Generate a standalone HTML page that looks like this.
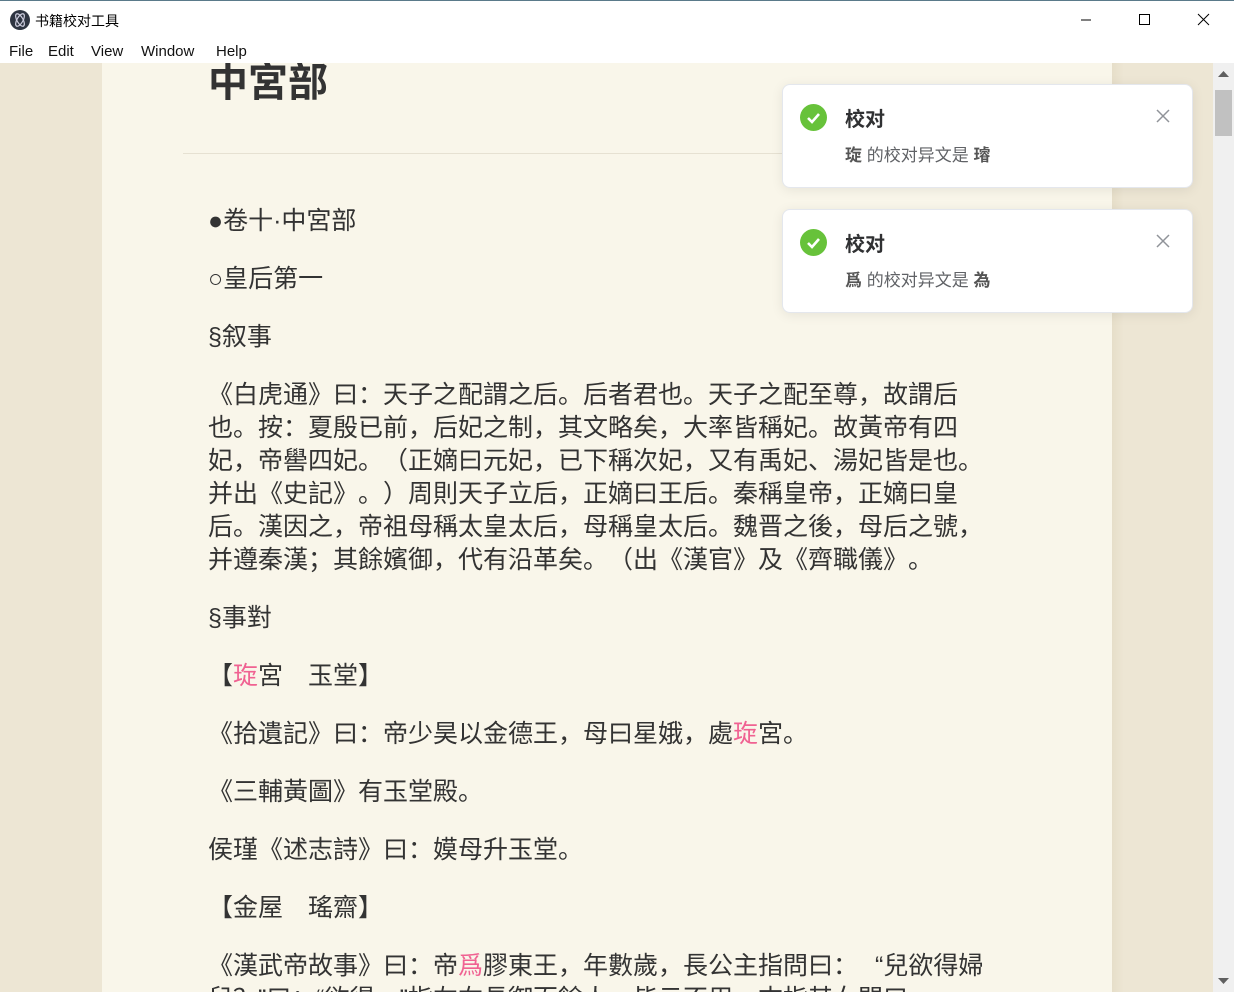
<!DOCTYPE html>
<html><head><meta charset="utf-8"><style>
*{margin:0;padding:0;box-sizing:border-box}
body{width:1234px;height:992px;overflow:hidden;background:#fff;font-family:"Liberation Sans","Noto Sans CJK SC",sans-serif;position:relative}
.tb{position:absolute;left:0;top:0;width:1234px;height:38px;background:#fff;border-top:1px solid #5a7a8a}
.tb .t{position:absolute;left:35px;top:10px;font-size:14px;color:#000}
.ic{position:absolute;left:10px;top:9px;width:20px;height:20px;border-radius:50%;background:#2f3542}
.menu{position:absolute;left:0;top:38px;height:25px;width:1234px;background:#fff;font-size:15px;color:#111}
.menu span{position:absolute;top:5px}
.wc{position:absolute;top:0;height:38px;width:58px}
.bgl{position:absolute;left:0;top:63px;width:102px;height:929px;background:#ede6d4}
.bgr{position:absolute;left:1112px;top:63px;width:102px;height:929px;background:linear-gradient(90deg,#e6dec9,#ede6d4 12px)}
.page{position:absolute;left:102px;top:63px;width:1010px;height:929px;background:#f9f6ea;overflow:hidden}
.sb{position:absolute;left:1213px;top:63px;width:21px;height:929px;background:#f0f0f0}
.th{position:absolute;left:2px;top:27px;width:17px;height:46px;background:#c1c1c1}
.txt{position:absolute;left:106px;color:#333;font-size:25px;line-height:33px;white-space:nowrap;font-family:"Liberation Sans","Noto Sans CJK SC",sans-serif;font-kerning:none;font-feature-settings:"palt" 0,"halt" 0,"chws" 0;text-spacing-trim:space-all}
.h1{position:absolute;left:106px;top:-13px;font-size:40px;font-weight:bold;color:#333;font-family:"Noto Sans CJK SC",sans-serif}
.hr{position:absolute;left:81px;top:90px;width:700px;height:1px;background:#e6e1d2}
.r{color:#f06292}
.toast{position:absolute;left:782px;width:411px;height:104px;background:#fff;border:1px solid #e4e7ed;border-radius:8px;box-shadow:0 2px 12px rgba(0,0,0,.08)}
.toast .ok{position:absolute;left:17px;top:19px;width:27px;height:27px;border-radius:50%;background:#67c23a}
.toast .tt{position:absolute;left:62px;top:18px;font-size:20px;font-weight:bold;color:#303133}
.toast .m{position:absolute;left:62px;top:56px;font-size:17px;color:#606266}
.toast .m b{color:#555}
.toast .x{position:absolute;left:373px;top:24px}
</style></head><body>
<div class="tb"><div class="ic"><svg width="20" height="20" viewBox="0 0 20 20"><g fill="none" stroke="#ccd" stroke-width="1.2"><ellipse cx="10" cy="10" rx="7" ry="3" transform="rotate(60 10 10)"/><ellipse cx="10" cy="10" rx="7" ry="3" transform="rotate(-60 10 10)"/></g></svg></div><div class="t">书籍校对工具</div>
<svg class="wc" style="left:1057px" viewBox="0 0 58 38"><path d="M24 19h10" stroke="#000" stroke-width="1"/></svg>
<svg class="wc" style="left:1115px" viewBox="0 0 58 38"><rect x="24.5" y="13.5" width="10" height="10" fill="none" stroke="#000"/></svg>
<svg class="wc" style="left:1174px" viewBox="0 0 58 38"><path d="M24 13l11 11M35 13l-11 11" stroke="#000"/></svg>
</div>
<div class="menu"><span style="left:9px">File</span><span style="left:48px">Edit</span><span style="left:91px">View</span><span style="left:141px">Window</span><span style="left:216px">Help</span></div>
<div class="bgl"></div><div class="bgr"></div>
<div class="page">
<div class="h1">中宮部</div>
<div class="hr"></div>
<div class="txt" style="top:142px">●卷十·中宮部</div>
<div class="txt" style="top:200px">○皇后第一</div>
<div class="txt" style="top:258px">§叙事</div>
<div class="txt" style="top:316px">《白虎通》曰：天子之配謂之后。后者君也。天子之配至尊，故謂后<br>也。按：夏殷已前，后妃之制，其文略矣，大率皆稱妃。故黃帝有四<br>妃，帝嚳四妃。（正嫡曰元妃，已下稱次妃，又有禹妃、湯妃皆是也。<br>并出《史記》。）周則天子立后，正嫡曰王后。秦稱皇帝，正嫡曰皇<br>后。漢因之，帝祖母稱太皇太后，母稱皇太后。魏晋之後，母后之號，<br>并遵秦漢；其餘嬪御，代有沿革矣。（出《漢官》及《齊職儀》。</div>
<div class="txt" style="top:539px">§事對</div>
<div class="txt" style="top:597px">【<span class="r">琁</span>宮　玉堂】</div>
<div class="txt" style="top:655px">《拾遺記》曰：帝少昊以金德王，母曰星娥，處<span class="r">琁</span>宮。</div>
<div class="txt" style="top:713px">《三輔黃圖》有玉堂殿。</div>
<div class="txt" style="top:771px">侯瑾《述志詩》曰：嫫母升玉堂。</div>
<div class="txt" style="top:829px">【金屋　瑤齋】</div>
<div class="txt" style="top:887px">《漢武帝故事》曰：帝<span class="r">爲</span>膠東王，年數歲，長公主指問曰：<span style="display:inline-block;width:17px"></span>“兒欲得婦<br>兒？”曰：“欲得。”指左右長御百餘人，皆云不用。末指其女問曰</div>
</div>
<div class="sb"><svg style="position:absolute;left:5px;top:8px" width="11" height="6"><path d="M0 6L5.5 0L11 6z" fill="#606060"/></svg><div class="th"></div><svg style="position:absolute;left:5px;top:915px" width="11" height="6"><path d="M0 0L5.5 6L11 0z" fill="#606060"/></svg></div>
<div class="toast" style="top:84px"><div class="ok"><svg width="27" height="27"><path d="M8 14l4 4 7-8" fill="none" stroke="#fff" stroke-width="2.6"/></svg></div><div class="tt">校对</div><div class="m"><b>琁</b> 的校对异文是 <b>璿</b></div><svg class="x" width="14" height="14"><path d="M1 1l12 12M13 1L1 13" stroke="#909399" stroke-width="1.5"/></svg></div>
<div class="toast" style="top:209px"><div class="ok"><svg width="27" height="27"><path d="M8 14l4 4 7-8" fill="none" stroke="#fff" stroke-width="2.6"/></svg></div><div class="tt">校对</div><div class="m"><b>爲</b> 的校对异文是 <b>為</b></div><svg class="x" width="14" height="14"><path d="M1 1l12 12M13 1L1 13" stroke="#909399" stroke-width="1.5"/></svg></div>
</body></html>
